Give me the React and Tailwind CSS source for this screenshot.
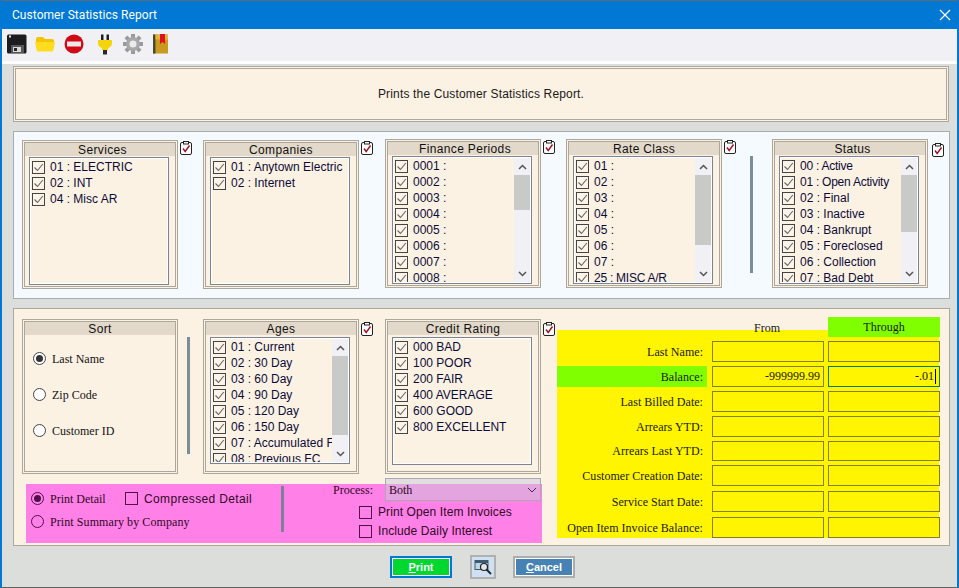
const sans = "font-['Liberation_Sans',Arial,sans-serif]";
const serif = "font-['Liberation_Serif','Times_New_Roman',serif]";

function Check({ checked = true, pink = false }) {
  return (
    <span className={`flex h-[13px] w-[13px] shrink-0 items-center justify-center border ${pink ? "border-[#50104a]" : "border-[#444444] bg-[#fcf4e8]"}`}>
      {checked && (
        <svg width="11" height="11" viewBox="0 0 11 11" fill="none">
          <path d="M1.5 5.5 L4.5 8.5 L9.8 2" stroke="#666666" strokeWidth="1.1" />
        </svg>
      )}
    </span>
  );
}

function Radio({ on = false, pink = false }) {
  return (
    <span className={`flex h-[13px] w-[13px] shrink-0 items-center justify-center rounded-full border ${pink ? "border-[#50104a]" : "border-[#444444] bg-white"}`}>
      {on && <span className={`h-[7px] w-[7px] rounded-full ${pink ? "bg-[#50104a]" : "bg-[#333333]"}`} />}
    </span>
  );
}

function ClipCheck({ className = "" }) {
  return (
    <svg className={`shrink-0 ${className}`} width="12" height="14" viewBox="0 0 12 14" fill="none">
      <rect x="0.5" y="1.5" width="11" height="12" rx="1.5" fill="#ffffff" stroke="#222222" />
      <rect x="3.5" y="0.5" width="5" height="2.5" fill="#ffffff" stroke="#222222" />
      <path d="M3 7.5 L5.2 10.5 L9.5 4.5" stroke="#a01020" strokeWidth="1.4" />
    </svg>
  );
}

function Group({ title, h, titleClass = "", children }) {
  return (
    <div className={`w-[156px] shrink-0 border border-[#aba79d] bg-[#fcf2e4] p-px ${h}`}>
      <div className="flex h-full flex-col border border-[#aba79d]">
        <div className={`h-[13px] bg-[#e3d9ca] text-center text-[12px] leading-[15px] tracking-[0.35px] text-[#111111] ${sans} ${titleClass}`}>{title}</div>
        {children}
      </div>
    </div>
  );
}

function List({ items, scroll, h = "h-[128px]", mt = "mt-px" }) {
  const tight = ["01 : Open Activity", "25 : MISC A/R", "00 : Active"];
  return (
    <div className={`ml-[4px] flex w-[140px] overflow-hidden border border-[#7b8494] ${mt} ${h}`}>
      <div className="flex min-w-0 flex-1 border border-white">
        <div className="min-w-0 flex-1 overflow-hidden">
          {items.map((t) => (
            <div key={t} className={`flex h-4 items-center gap-[5px] pl-px text-[12px] whitespace-nowrap text-[#0b0b38] ${sans}`}>
              <Check />
              <span className={tight.includes(t) ? "tracking-[-0.25px]" : ""}>{t}</span>
            </div>
          ))}
        </div>
        {scroll && (
          <div className="flex w-[16px] shrink-0 flex-col bg-[#f1f0f5]">
            <div className="flex h-[17px] items-center justify-center">
              <svg width="9" height="6" viewBox="0 0 9 6" fill="none"><path d="M1 5 L4.5 1.5 L8 5" stroke="#555555" strokeWidth="1.5" /></svg>
            </div>
            <div className={`bg-[#c8cac8] ${scroll}`} />
            <div className="flex-1" />
            <div className="flex h-[17px] items-center justify-center">
              <svg width="9" height="6" viewBox="0 0 9 6" fill="none"><path d="M1 1 L4.5 4.5 L8 1" stroke="#555555" strokeWidth="1.5" /></svg>
            </div>
          </div>
        )}
      </div>
    </div>
  );
}

function Sep({ className = "" }) {
  return <div className={`w-[3px] shrink-0 bg-[#7c8d9a] ${className}`} />;
}

function DateRow({ label, from = "", through = "", hl = false, className = "" }) {
  return (
    <div className={`flex h-[21px] w-[383px] items-stretch ${serif} ${className}`}>
      <div className={`mr-[5px] flex w-[150px] shrink-0 items-center justify-end pt-px pr-[4px] text-[12px] tracking-[0.03px] text-[#1a1a00] ${hl ? "bg-[#80ff00]" : ""}`}>{label}</div>
      <div className="mr-[4px] flex w-[112px] shrink-0 items-center justify-end border border-[#85801a] pr-[3px] text-[12px] text-[#1a1a00]">{from}</div>
      <div className={`flex w-[112px] shrink-0 items-center justify-end border pr-[3px] text-[12px] text-[#1a1a00] ${hl ? "border-[#0a7a50]" : "border-[#85801a]"}`}>
        {through}
        {hl && <span className="ml-px h-[15px] w-px bg-black" />}
      </div>
    </div>
  );
}

function Toolbar() {
  return (
    <div className="flex h-[32px] shrink-0 items-center bg-[#f1f0f5] pb-[2px] pl-[5px]">
      <svg width="20" height="20" viewBox="0 0 20 20">
        <rect x="0" y="0.5" width="19.5" height="19" rx="1.5" fill="#1c1c1e" />
        <rect x="2" y="1.5" width="2" height="2" fill="#e8e8e8" />
        <rect x="4" y="11" width="13" height="8" fill="#55565a" />
        <rect x="6" y="13" width="8" height="5" fill="#d8d8d8" />
        <rect x="7" y="14" width="3" height="3" fill="#222222" />
      </svg>
      <svg className="ml-[8px]" width="20" height="16" viewBox="0 0 20 16">
        <path d="M1 3 Q1 1 3 1 H8 L10 3 H17 Q19 3 19 5 V6 H1 Z" fill="#f5c400" />
        <path d="M0 6 H20 L18.5 14 Q18.3 15.5 16.5 15.5 H3.5 Q1.7 15.5 1.5 14 Z" fill="#ffdc20" />
      </svg>
      <svg className="ml-[9px]" width="20" height="20" viewBox="0 0 20 20">
        <circle cx="10" cy="10" r="9.5" fill="#cf0a14" />
        <rect x="3" y="7.5" width="14" height="5" fill="#f2e6e6" />
      </svg>
      <svg className="ml-[14px]" width="14" height="21" viewBox="0 0 14 21">
        <rect x="3" y="0.5" width="2.5" height="5.5" fill="#222222" />
        <rect x="8.5" y="0.5" width="2.5" height="5.5" fill="#222222" />
        <path d="M0 6 H14 V9 Q14 13 10 14 V16 H4 V14 Q0 13 0 9 Z" fill="#f4d40c" />
        <rect x="5" y="16" width="4" height="4.5" fill="#2a2a2a" />
      </svg>
      <svg className="ml-[11px]" width="20" height="20" viewBox="0 0 20 20">
        <g fill="#9a9a9a">
          <rect x="8" y="0" width="4" height="20" />
          <rect x="0" y="8" width="20" height="4" />
          <rect x="8" y="0" width="4" height="20" transform="rotate(45 10 10)" />
          <rect x="8" y="0" width="4" height="20" transform="rotate(-45 10 10)" />
        </g>
        <circle cx="10" cy="10" r="7" fill="#a8a8a8" />
        <circle cx="10" cy="10" r="3.5" fill="#ececec" />
      </svg>
      <svg className="ml-[10px]" width="15" height="20" viewBox="0 0 15 20">
        <rect x="0" y="0.5" width="15" height="19" fill="#c99a1e" />
        <rect x="0" y="0.5" width="2.5" height="19" fill="#4a4a30" />
        <rect x="2.5" y="0.5" width="12.5" height="5" fill="#e0b838" />
        <path d="M7 0 H12 V10 L9.5 8 L7 10 Z" fill="#e01020" />
      </svg>
    </div>
  );
}

export default function App() {
  const nums = ["0001 :", "0002 :", "0003 :", "0004 :", "0005 :", "0006 :", "0007 :", "0008 :"];
  const rates = ["01 :", "02 :", "03 :", "04 :", "05 :", "06 :", "07 :", "25 : MISC A/R"];
  const status = ["00 : Active", "01 : Open Activity", "02 : Final", "03 : Inactive", "04 : Bankrupt", "05 : Foreclosed", "06 : Collection", "07 : Bad Debt"];
  const ages = ["01 : Current", "02 : 30 Day", "03 : 60 Day", "04 : 90 Day", "05 : 120 Day", "06 : 150 Day", "07 : Accumulated FC", "08 : Previous FC"];
  const credit = ["000 BAD", "100 POOR", "200 FAIR", "400 AVERAGE", "600 GOOD", "800 EXCELLENT"];
  return (
    <div className="flex h-[588px] w-[959px] flex-col overflow-hidden border-x-2 border-t border-b border-x-[#0078d4] border-t-[#5a6a78] border-b-[#606060] bg-[#dcdedc]">
      <div className="flex h-[28px] shrink-0 items-center justify-between bg-[#0078d4] pr-[6px] pl-[10px]">
        <span className="font-['Roboto',sans-serif] text-[12px] tracking-[0.05px] text-white">Customer Statistics Report</span>
        <svg width="12" height="12" viewBox="0 0 12 12" fill="none"><path d="M1 1 L11 11 M11 1 L1 11" stroke="#ffffff" strokeWidth="1.2" /></svg>
      </div>
      <Toolbar />
      <div className="h-[3px] shrink-0 bg-white" />

      <div className="mt-[2px] ml-[11px] flex h-[56px] w-[936px] shrink-0 border border-[#aba79d] bg-[#fcf2e4] p-px">
        <div className={`flex flex-1 items-center justify-center border border-[#aba79d] text-[12px] tracking-[0.16px] text-[#1a1a1a] ${sans}`}>
          Prints the Customer Statistics Report.
        </div>
      </div>

      <div className="mt-[9px] ml-[11px] flex h-[168px] w-[937px] shrink-0 items-start border border-[#a9adb0] bg-[#f5faff] pl-[8px]">
        <div className="mt-[8px] flex w-[181px] items-start">
          <Group title="Services" h="h-[149px]" titleClass="pl-[5px]"><List items={["01 : ELECTRIC", "02 : INT", "04 : Misc AR"]} /></Group>
          <ClipCheck className="mt-px ml-[2px]" />
        </div>
        <div className="mt-[8px] flex w-[182px] items-start">
          <Group title="Companies" h="h-[149px]"><List items={["01 : Anytown Electric", "02 : Internet"]} /></Group>
          <ClipCheck className="mt-px ml-[2px]" />
        </div>
        <div className="mt-[7px] flex w-[181px] items-start">
          <Group title="Finance Periods" h="h-[149px]" titleClass="pl-[4px]"><List items={nums} scroll="h-[35px]" /></Group>
          <ClipCheck className="mt-px ml-[2px]" />
        </div>
        <div className="mt-[7px] flex w-[184px] items-start">
          <Group title="Rate Class" h="h-[149px]"><List items={rates} scroll="h-[70px]" /></Group>
          <ClipCheck className="mt-px ml-[2px]" />
        </div>
        <Sep className="mt-[24px] h-[117px]" />
        <div className="mt-[7px] ml-[19px] flex items-start">
          <Group title="Status" h="h-[149px]" titleClass="pl-[5px]"><List items={status} scroll="h-[57px]" /></Group>
          <ClipCheck className="mt-[4px] ml-[4px]" />
        </div>
      </div>

      <div className="mt-[9px] ml-[11px] flex h-[238px] w-[937px] shrink-0 items-start border border-[#aba79d] bg-[#fcf2e4] pl-[8px]">
        <div className="mt-[10px] w-[535px] shrink-0">
          <div className="flex items-start">
            <Group title="Sort" h="h-[155px]">
              <div className={`flex flex-col gap-[23px] pt-[17px] pl-[8px] text-[12px] text-[#111111] ${serif}`}>
                <div className="flex h-[13px] items-center gap-[6px]"><Radio on />Last Name</div>
                <div className="flex h-[13px] items-center gap-[6px]"><Radio />Zip Code</div>
                <div className="flex h-[13px] items-center gap-[6px]"><Radio />Customer ID</div>
              </div>
            </Group>
            <Sep className="mt-[18px] ml-[9px] h-[117px]" />
            <div className="ml-[13px] flex w-[182px] items-start">
              <Group title="Ages" h="h-[155px]"><List items={ages} scroll="h-[79px]" h="h-[127px]" mt="mt-[2px]" /></Group>
              <ClipCheck className="mt-[3px] ml-[2px]" />
            </div>
            <div className="flex items-start">
              <Group title="Credit Rating" h="h-[155px]"><List items={credit} h="h-[128px]" mt="mt-[2px]" /></Group>
              <ClipCheck className="mt-[3px] ml-[2px]" />
            </div>
          </div>

          <div className="mt-[10px] ml-[4px] flex h-[59px] w-[516px] items-start bg-[#ff80e6] text-[#300828]">
            <div className="flex w-[255px] shrink-0 flex-col gap-[10px] pt-[8px] pl-[5px]">
              <div className={`flex h-[13px] items-center text-[12px] ${serif}`}>
                <Radio on pink />
                <span className="ml-[6px] w-[75px]">Print Detail</span>
                <Check checked={false} pink />
                <span className={`ml-[6px] tracking-[0.35px] ${sans}`}>Compressed Detail</span>
              </div>
              <div className={`flex h-[13px] items-center gap-[6px] text-[12px] tracking-[0.08px] ${serif}`}>
                <Radio pink />Print Summary by Company
              </div>
            </div>
            <Sep className="mt-[2px] h-[46px] bg-[#7f7f9a]" />
            <div className="flex flex-col">
              <div className="flex items-start">
                <span className={`mt-[-1px] ml-[49px] w-[52px] text-[12px] leading-[14px] ${serif}`}>Process:</span>
                <div className={`relative mt-[-6px] flex h-[23px] w-[156px] items-center justify-between border border-[#a9a9b4] bg-[#c8c8d8]/50 pr-[3px] pl-[3px] text-[12px] text-[#300828] ${serif}`}>
                  Both
                  <svg width="10" height="6" viewBox="0 0 10 6" fill="none"><path d="M1 1 L5 5 L9 1" stroke="#40304a" strokeWidth="1" /></svg>
                </div>
              </div>
              <div className={`mt-[5px] ml-[75px] flex h-[13px] items-center gap-[6px] text-[12px] tracking-[0.1px] ${sans}`}>
                <Check checked={false} pink /><span className="mt-[-2px]">Print Open Item Invoices</span>
              </div>
              <div className={`mt-[6px] ml-[75px] flex h-[13px] items-center gap-[6px] text-[12px] tracking-[0.1px] ${sans}`}>
                <Check checked={false} pink /><span className="mt-[-2px]">Include Daily Interest</span>
              </div>
            </div>
          </div>
        </div>

        <div className="mt-[8px] w-[383px] shrink-0">
          <div className={`relative z-10 mb-[-7px] flex h-[20px] text-[12px] text-[#1a1a00] ${serif}`}>
            <div className="ml-[154px] flex h-[22px] w-[112px] items-center justify-center">From</div>
            <div className="ml-[5px] flex h-[20px] w-[112px] items-center justify-center bg-[#80ff00]">Through</div>
          </div>
          <div className="flex h-[208px] w-[382px] flex-col gap-[4px] bg-[#fff500] pt-[11px]">
            <DateRow label="Last Name:" />
            <DateRow label="Balance:" from="-999999.99" through="-.01" hl />
            <DateRow label="Last Billed Date:" />
            <DateRow label="Arrears YTD:" />
            <DateRow label="Arrears Last YTD:" />
            <DateRow label="Customer Creation Date:" />
            <DateRow label="Service Start Date:" className="mt-px" />
            <DateRow label="Open Item Invoice Balance:" className="mt-px" />
          </div>
        </div>
      </div>

      <div className={`flex flex-1 items-center pl-[388px] ${sans}`}>
        <div className="flex h-[22px] w-[62px] items-center justify-center border-2 border-[#0078d4] bg-white p-px">
          <div className="flex h-full w-full items-center justify-center bg-[#00d72f] pt-px text-[11px] font-bold text-white"><span className="underline">P</span>rint</div>
        </div>
        <div className="ml-[18px] flex h-[24px] w-[26px] items-center justify-center border-2 border-[#b0b0b0] bg-[#cfe0f2]">
          <svg width="18" height="17" viewBox="0 0 18 17" fill="none">
            <rect x="0.5" y="2" width="14" height="10" fill="#3d5a70" />
            <rect x="1.5" y="5" width="12" height="6" fill="#c0d4e4" />
            <circle cx="10" cy="9" r="3.5" fill="#dfe8ee" stroke="#222222" strokeWidth="1.2" />
            <path d="M12.5 11.5 L17 16" stroke="#222222" strokeWidth="1.8" />
          </svg>
        </div>
        <div className="ml-[17px] flex h-[22px] w-[62px] items-center justify-center border-2 border-[#adadad] bg-white p-px">
          <div className="flex h-full w-full items-center justify-center bg-[#4682b4] pt-px text-[11px] font-bold text-white"><span className="underline">C</span>ancel</div>
        </div>
      </div>
    </div>
  );
}
